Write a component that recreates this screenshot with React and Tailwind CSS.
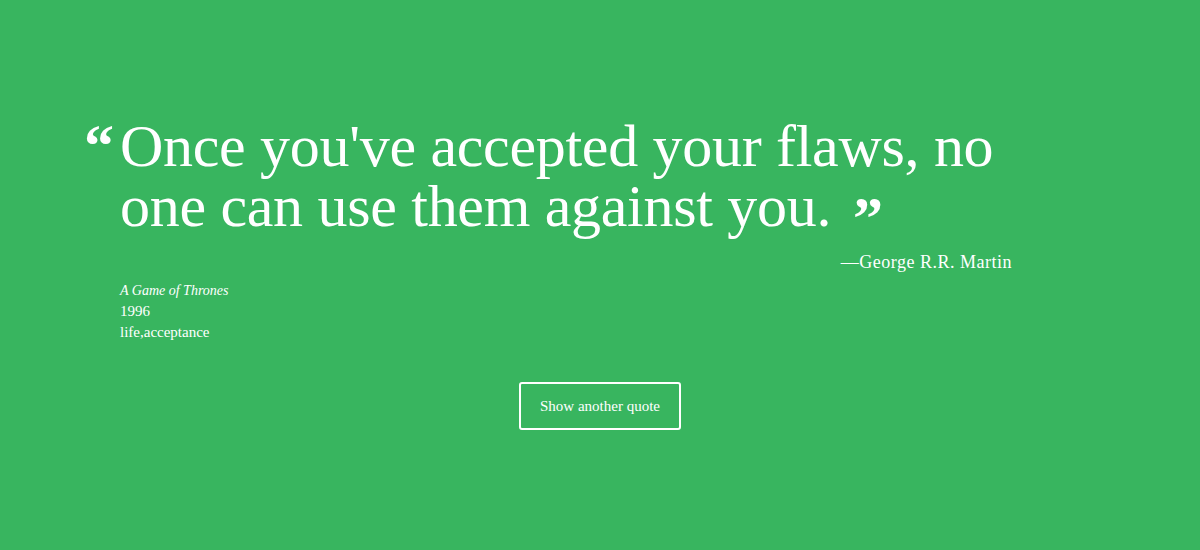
import React from 'react';

const quote = {
  author: 'George R.R. Martin',
  source: 'A Game of Thrones',
  year: '1996',
  tags: 'life,acceptance',
};

const App = () => {
  return (
    <div className="min-h-[550px] w-full bg-[#38b55f] text-white font-['Liberation_Serif',serif]">
      <div className="pt-[116px] pl-[84px]">
        {/* quote */}
        <div className="flex">
          <span className="w-[36px] shrink-0 text-[60px] font-bold leading-[60px]">&ldquo;</span>
          <blockquote className="w-[960px] whitespace-nowrap text-[60px] leading-[60px] tracking-[-0.3px]">
            Once you've accepted your flaws, no
            <br />
            one can use them against you.
            <span className="relative top-[12px] ml-[22px] text-[60px] font-bold">&rdquo;</span>
          </blockquote>
        </div>
        <div className="w-[928px] pt-[14px] text-right text-[18px] leading-[24px] tracking-[0.5px]">&mdash;{quote.author}</div>

        {/* meta */}
        <div className="pl-[36px] pt-[6px] text-[15px] leading-[21px]">
          <div className="text-[14px] italic">{quote.source}</div>
          <div>{quote.year}</div>
          <div>{quote.tags}</div>
        </div>
      </div>

      <div className="flex justify-center pt-[39px]">
        <button
          type="button"
          className="h-[48px] w-[162px] rounded-[3px] border-2 border-white text-[15px] text-white"
        >
          Show another quote
        </button>
      </div>
    </div>
  );
};

export default App;
